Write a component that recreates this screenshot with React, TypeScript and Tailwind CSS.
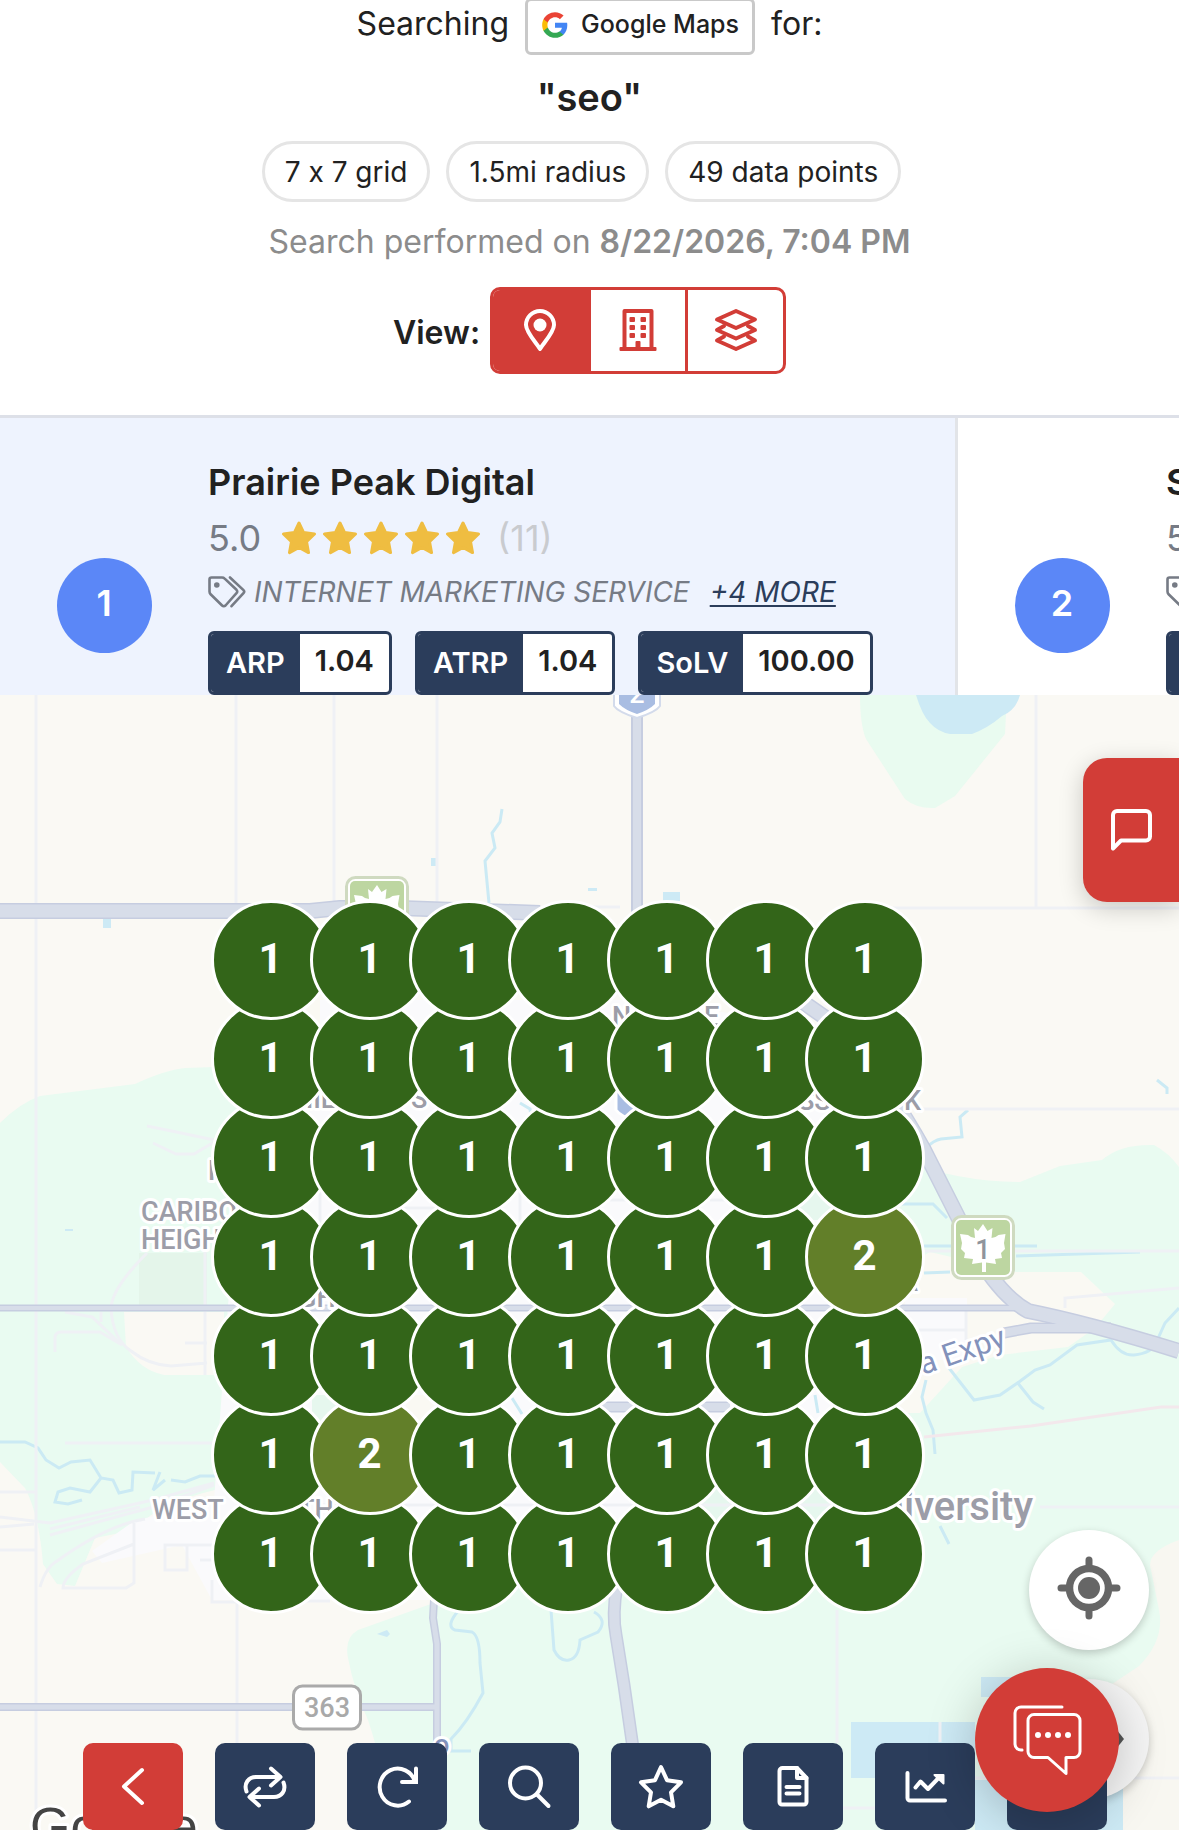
import type { ReactNode } from "react";

const GRID = [
    [1, 1, 1, 1, 1, 1, 1],
    [1, 1, 1, 1, 1, 1, 1],
    [1, 1, 1, 1, 1, 1, 1],
    [1, 1, 1, 1, 1, 1, 2],
    [1, 1, 1, 1, 1, 1, 1],
    [1, 2, 1, 1, 1, 1, 1],
    [1, 1, 1, 1, 1, 1, 1],
];

type Business = {
    rank: number;
    name: string;
    rating: string;
    reviews: number;
    category: string;
    more: string;
    metrics: [string, string][];
};

const BUSINESSES: Business[] = [
    {
        rank: 1,
        name: "Prairie Peak Digital",
        rating: "5.0",
        reviews: 11,
        category: "INTERNET MARKETING SERVICE",
        more: "+4 MORE",
        metrics: [
            ["ARP", "1.04"],
            ["ATRP", "1.04"],
            ["SoLV", "100.00"],
        ],
    },
    {
        rank: 2,
        name: "S",
        rating: "5.0",
        reviews: 9,
        category: "INTERNET MARKETING SERVICE",
        more: "+2 MORE",
        metrics: [["ARP", "2.10"]],
    },
];

/* ---------- icons ---------- */

function GoogleIcon() {
    return (
        <svg viewBox="0 0 48 48" className="size-7">
            <path fill="#4285F4" d="M45.1 24.5c0-1.6-.1-3.1-.4-4.5H24v8.500h11.800c-.5 2.800-2.100 5.100-4.400 6.700v5.500h7.100c4.200-3.800 6.600-9.500 6.600-16.200z" />
            <path fill="#34A853" d="M24 46c5.900 0 10.900-2 14.500-5.300l-7.100-5.500c-2 1.300-4.500 2.100-7.400 2.100-5.700 0-10.600-3.900-12.300-9.100H4.300v5.700C8 41.100 15.400 46 24 46z" />
            <path fill="#FBBC05" d="M11.700 28.200c-.4-1.300-.7-2.700-.7-4.200s.3-2.900.7-4.200v-5.700H4.300C2.900 17.100 2 20.500 2 24s.9 6.900 2.300 9.900l7.400-5.700z" />
            <path fill="#EA4335" d="M24 10.700c3.200 0 6.100 1.100 8.400 3.300l6.300-6.300C34.900 4.200 29.900 2 24 2 15.400 2 8 6.900 4.300 14.100l7.400 5.700c1.700-5.200 6.600-9.100 12.300-9.100z" />
        </svg>
    );
}

function PinIcon() {
    return (
        <svg viewBox="0 0 42 42" className="size-[42px]">
            <path d="M21 40C17 33.500 7 23 7 16a14 14 0 0 1 28 0c0 7-10 17.500-14 24z" fill="none" stroke="currentColor" strokeWidth="4" strokeLinejoin="round" />
            <circle cx="21" cy="16" r="6.500" fill="currentColor" />
        </svg>
    );
}

function BuildingIcon() {
    return (
        <svg viewBox="0 0 42 42" className="size-[42px]" fill="currentColor">
            <path d="M7.500 39V2h27v37" fill="none" stroke="currentColor" strokeWidth="4" strokeLinejoin="round" />
            <rect x="2.500" y="38" width="37" height="4" rx="1" />
            <rect x="12.500" y="8" width="5.500" height="5" rx="1" />
            <rect x="23.500" y="8" width="5.500" height="5" rx="1" />
            <rect x="12.500" y="16" width="5.500" height="5" rx="1" />
            <rect x="23.500" y="16" width="5.500" height="5" rx="1" />
            <rect x="12.500" y="24" width="5.500" height="5" rx="1" />
            <rect x="23.500" y="24" width="5.500" height="5" rx="1" />
            <rect x="18.500" y="32" width="5" height="8" rx="1" />
        </svg>
    );
}

function LayersIcon() {
    return (
        <svg viewBox="0 0 42 42" className="size-[42px]" fill="none" stroke="currentColor" strokeWidth="3.800" strokeLinejoin="round" strokeLinecap="round">
            <path d="M21 2l19 8.500L21 19 2 10.500z" />
            <path d="M9 17l-7 4 19 8.500L40 21l-7-4" />
            <path d="M9 27.500l-7 4L21 40l19-8.500-7-4" />
        </svg>
    );
}

function StarIcon() {
    return (
        <svg viewBox="0 0 36 34" className="h-[34px] w-9">
            <path d="M18 2l4.600 9.600L33.500 13l-8 7.600 2 11L18 26.500 8.500 31.600l2-11-8-7.600 10.900-1.400z" fill="#efbd41" stroke="#efbd41" strokeWidth="3" strokeLinejoin="round" />
        </svg>
    );
}

function TagsIcon() {
    return (
        <svg viewBox="0 0 38 32" className="h-8 w-[38px] shrink-0" fill="none" stroke="currentColor" strokeWidth="2.600" strokeLinejoin="round" strokeLinecap="round">
            <path d="M3.500 1.500H14c1 0 2 .4 2.700 1.100L28.500 13.800c1 1 1 2.400 0 3.400L17.500 29.500c-1 1-2.400 1-3.400 0L2.600 18.200c-.7-.7-1.100-1.700-1.100-2.700V3.500c0-1.100.9-2 2-2z" />
            <path d="M22 1.500l13.500 12.600c.9.900.9 2 0 3L23.500 30.200" />
            <circle cx="8.800" cy="9" r="2" fill="currentColor" stroke="none" />
            <circle cx="8.800" cy="9" r="1.500" fill="currentColor" />
        </svg>
    );
}

function SpeechIcon() {
    return (
        <svg viewBox="0 0 41 42" className="h-[42px] w-[41px]" fill="none" stroke="currentColor" strokeWidth="4" strokeLinejoin="round">
            <path d="M2 39.500V6a4 4 0 0 1 4-4h29a4 4 0 0 1 4 4v21.500a4 4 0 0 1-4 4H10z" />
        </svg>
    );
}

function ChatIcon() {
    return (
        <svg viewBox="0 0 144 144" className="size-36" fill="none" stroke="currentColor" strokeWidth="3" strokeLinejoin="round" strokeLinecap="round">
            <path d="M87 39H46a6 6 0 0 0-6 6v31a6 6 0 0 0 7 6" />
            <path d="M59 46.500h40a6 6 0 0 1 6 6v31a6 6 0 0 1-6 6h-8v16L73 89.500H59a6 6 0 0 1-6-6v-31a6 6 0 0 1 6-6z" />
            <g fill="currentColor" stroke="none">
                <circle cx="63" cy="67" r="3" />
                <circle cx="73" cy="67" r="3" />
                <circle cx="83" cy="67" r="3" />
                <circle cx="93" cy="67" r="3" />
            </g>
        </svg>
    );
}

function LocateIcon() {
    return (
        <svg viewBox="0 0 64 64" className="size-16" fill="none" stroke="#666">
            <path d="M32 4v8M32 52v8M4 32h8M52 32h8" strokeWidth="7" strokeLinecap="round" />
            <circle cx="32" cy="32" r="19.500" strokeWidth="7.500" />
            <circle cx="32" cy="32" r="11" fill="#666" stroke="none" />
        </svg>
    );
}

/* Toolbar icons share one 100x87 canvas, the size of a button. */
function ToolIcon({ children }: { children?: ReactNode }) {
    return (
        <svg viewBox="0 0 100 87" className="h-[87px] w-[100px]" fill="none" stroke="currentColor" strokeWidth="4" strokeLinejoin="round" strokeLinecap="round">
            {children}
        </svg>
    );
}

const TOOLS: { label: string; icon: ReactNode }[] = [
    {
        label: "Repeat search",
        icon: (
            <>
                <path d="M31.500 48.500c-3-8 2-14.500 9.500-14.500h24M56 25.500l9.500 8.500-9.500 8.500" />
                <path d="M68.500 39.500c3 8-2 14.500-9.500 14.500H35M44 45.500L34.500 54l9.500 8.500" />
            </>
        ),
    },
    {
        label: "Refresh",
        icon: (
            <>
                <path d="M62 58.500A18 18.500 0 1 1 68 39" />
                <path d="M69 25.500V39H55" strokeLinejoin="miter" />
            </>
        ),
    },
    {
        label: "Search",
        icon: (
            <>
                <circle cx="46.500" cy="40" r="15.500" />
                <path d="M58 51.500L69.500 63" />
            </>
        ),
    },
    {
        label: "Favourite",
        icon: <path d="M50 24l6 13.200 14 2.100-10 10 2.300 14L50 56.700l-12.300 6.600 2.300-14-10-10 14-2.100z" />,
    },
    {
        label: "Report",
        icon: (
            <>
                <path d="M39.500 25H54l9.500 10v24a2.500 2.500 0 0 1-2.500 2.500H39a2.500 2.500 0 0 1-2.500-2.500V28a3 3 0 0 1 3-3z" />
                <path d="M54 25v10h9.500M43.500 44h13M43.500 50.500h13" />
            </>
        ),
    },
    {
        label: "Trends",
        icon: (
            <>
                <path d="M32.500 30v25a2.500 2.500 0 0 0 2.500 2.500h35" />
                <path d="M40.500 44.500l5-6 7.500 7.500L63 35.500" />
                <path d="M59.500 32h9v8.500z" fill="currentColor" strokeWidth="2" />
            </>
        ),
    },
    { label: "More", icon: null },
];

/* ---------- map ---------- */

function MapleShield({ x, y, children }: { x: number; y: number; children?: ReactNode }) {
    return (
        <g transform={`translate(${x} ${y})`}>
            <rect x="1.500" y="1.500" width="61" height="62" rx="9" fill="#fff" stroke="#cfdac0" strokeWidth="3" />
            <rect x="5" y="5" width="54" height="55" rx="5" fill="#bdd6a1" />
            <path d="M32 9l4.500 7 5-3-1 10 4-1 3-2 7-1-1.500 9 1 6-4 4 1 5-7 1 1 5-10-1.500V57h-4v-9.500L21 49l1-5-9-1 1-5-4-4 1-6-2-9 8 1 3 2 4 1-1-10 4 3z" fill="#fff" />
            {children}
        </g>
    );
}

function MapCanvas() {
    return (
        <svg viewBox="0 695 1179 1135" preserveAspectRatio="xMidYMid slice" className="absolute inset-0 h-full w-full">
            <rect y="695" width="1179" height="1135" fill="#faf9f4" />

            {/* green land */}
            <g fill="#e9fbf1">
                <path d="M860 695q0 30 6 44l39 60q12 10 30 9l20-12 50-62 2-39z" fill="#e9fbf0" />
                <path d="M0 1123q20-20 40-27l95-12q30-14 50-16l60-2v400l-30 24q-60 14-80 40l-40 8-20 48-18-2-14-20q-4-50-18-76L0 1462z" />
                <path d="M900 1160q60 22 120 22l40-16 42-6q18-16 52-15 15 8 25 22v663H388q0-50-20-110-14-30-20-62-4-20 10-28l70-25 470-120z" />
            </g>
            <path d="M139 1253h68v52h-68z" fill="#e4f5ea" />
            <path d="M124 1312h100v63h-60q-24-5-38-28z" fill="#faf9f4" />
            <path d="M880 1280l50-28 86 20h65l34 32-20 24-27 19-68 8-38 12-42 46h-60z" fill="#faf9f3" />
            <path d="M905 1298h62v62h-62z" fill="#fafafc" />
            <path d="M1179 1540q-34 12-28 30l8 40q6 30-20 56l-39 26 23 138h56z" fill="#f8f7f1" />

            {/* built-up area, mostly behind the pins */}
            <path d="M250 1000h400l240 40v250l-60 200-240 80-160 30H212l-30-55-80 18-10-12 42-30 80-20z" fill="#fafafc" />
            <path d="M230 1000h90v40h-90zM406 1395h30v40h-30z" fill="#faf9f3" />
            <path d="M312 1395h28v36h-28zM800 1170h34v50h-34zM700 1480h34v50h-34zM800 1480h34v50h-34z" fill="#e6f7ee" />

            {/* water */}
            <g fill="#cdeaf5">
                <path d="M916 695q6 20 14 28 8 9 20 11h22q16-6 30-18 14-6 18-21z" />
                <path d="M851 1722h124v56H851zM981 1677h40v20h-40zM975 1780h148v50H975zM663 892h17v9h-17zM431 858h5v8h-5zM103 918h8v10h-8zM588 888h9v3h-9zM65 1229h8v2h-8zM377 1634l10-4 3 4-3 3z" />
            </g>
            <g fill="none" stroke="#cbeaf4" strokeWidth="3">
                <path d="M502 809l-2 13-8 11 3 15-10 13 4 42" />
                <path d="M926 1148q8-8 15-9l21-2-2-20 8-7M901 1204h32l14 14M924 1246h113M1016 1256l124-4M924 1273l26-1M1157 1080l10 8v6" />
                <path d="M949 1368l25 32 26-5 19-13 16-12 15-5 27-20 34-5q10 16 23 15 18-2 22-12l9-20 14-15" />
                <path d="M1017 1382l16 20 11 7M926 1380l-4 17 4 16 7 17 2 24M940 1526l9 18" />
                <path d="M0 1442h25l13 6 8 12 13 8 12-6 19-2 11 18 12 2 6 13 13-3 1-18 22 1M160 1472l-7 18 12-10M171 1480l14 2 15-6h20M101 1478l-11 14-20-4-12 4-3 10 13 2 14-4" />
                <path d="M459 1610q-14 16-4 20l17 2q8 4 8 31l3 30q-16 30-32 46v12h20M551 1610l3 40q6 12 15 10 10-2 11-20l18-8q10-12-4-20" />
                <path d="M520 1103l10 6 2 14M512 1398l10 16M815 1395l3 18" />
            </g>

            {/* minor roads */}
            <g fill="none" stroke="#eff1f5" strokeWidth="3">
                <path d="M36 695v1135M236 695v208M334 695v208M437 695v208M1036 695v213M893 908h286M580 907h40M237 1603v227M837 1610v133M920 1109h259M924 1251h255M65 1443h149M1040 1507h139" />
                <path d="M147 1126q30 6 67 14M153 1143l23 11h18l20-12M147 1253q-36 36-36 56 2 30 20 42 18 14 40 15l36-3M65 1312l27 5 30 28M55 1352v-14q0-6 6-6h39l22 13M205 1245v130M185 1343h22M101 1312v10" />
                <path d="M0 1492h36M0 1550h36M0 1517l50 6 103-23 61-17M0 1527l34-3M50 1535l103-28 61-22M50 1529l90-22M40 1587q6-20 17-26 50-36 88-42M134 1523v60l-8 5H63q0-10 20-24l51-20M165 1545h22v25h-22zM185 1545h30M200 1560h14M212 1580v22h30M300 1601h30" />
                <path d="M975 1778h204M940 1722v20M837 1808h40M966 1310v30M905 1330h62M1065 1308v-10l114-10" />
                <path d="M320 1190v40M400 1208h40M520 1190v40M610 1200h40M710 1200h40M320 1505h540" />
                <path d="M924 1437l107-11 130-19h18" stroke="#f3e8ec" />
            </g>

            {/* main roads */}
            <g fill="none" strokeLinejoin="round">
                <g stroke="#c6cde0">
                    <path d="M0 911h310l30-3h60l140 5" strokeWidth="16" />
                    <path d="M637 715v200" strokeWidth="12" />
                    <path d="M800 1000l40 28q50 60 84 122l38 75q30 66 66 86 60 12 151 40" strokeWidth="16" />
                    <path d="M1004 1333l27-5h80" strokeWidth="11" />
                    <path d="M0 1308h1019l50 18" strokeWidth="7" />
                    <path d="M0 1707h435M434 1600l-1 18 4 26v186" strokeWidth="8" />
                    <path d="M617 1585q-5 30-1 50l8 50 10 70" strokeWidth="13" />
                    <path d="M600 1407h130" strokeWidth="11" />
                </g>
                <g stroke="#d7dde9">
                    <path d="M0 911h310l30-3h60l140 5" strokeWidth="13" />
                    <path d="M637 715v200" strokeWidth="8" />
                    <path d="M800 1000l40 28q50 60 84 122l38 75q30 66 66 86 60 12 151 40" strokeWidth="13" />
                    <path d="M1004 1333l27-5h80" strokeWidth="8" />
                    <path d="M0 1308h1019l50 18" strokeWidth="4" />
                    <path d="M0 1707h435M434 1600l-1 18 4 26v186" strokeWidth="5" />
                    <path d="M617 1585q-5 30-1 50l8 50 10 70" strokeWidth="10" />
                    <path d="M600 1407h130" strokeWidth="8" />
                </g>
            </g>

            {/* shields */}
            <MapleShield x={345} y={876} />
            <MapleShield x={951} y={1215}>
                <text x="32" y="44" textAnchor="middle" fontSize="27" fill="#8f949c" fontWeight="500">1</text>
            </MapleShield>
            <path d="M614 680v26q4 6 23 12 19-6 23-12v-26z" fill="#fff" stroke="#d3dbeb" strokeWidth="2" />
            <path d="M619 680v24q6 6 18 10 12-4 18-10v-24z" fill="#a9bde2" />
            <text x="637" y="703" textAnchor="middle" fontSize="27" fill="#fff" fontWeight="500">2</text>
            <path d="M616 1090v20q4 6 21 12 17-6 21-12v-20z" fill="#a9bde2" stroke="#fff" strokeWidth="3" />
            <rect x="293.500" y="1686" width="67" height="43" rx="9" fill="#fff" stroke="#aaa" strokeWidth="3" />
            <text x="327" y="1717" textAnchor="middle" fontSize="27" fill="#a9a9a9" fontWeight="500">363</text>

            {/* place labels */}
            <g fontSize="27" fontWeight="500" fill="#9c9da8" stroke="#fff" strokeWidth="6" strokeLinejoin="round" paintOrder="stroke">
                <text x="141" y="1221">CARIBOU</text>
                <text x="141" y="1249">HEIGHTS</text>
                <text x="208" y="1180">N</text>
                <text x="152" y="1519">WEST</text>
                <text x="298" y="1519">TH</text>
                <text x="294" y="1108">HILLS</text>
                <text x="411" y="1108">S</text>
                <text x="298" y="1307">GH</text>
                <text x="612" y="1026">NO</text>
                <text x="704" y="1026">E</text>
                <text x="798" y="1110">SS</text>
                <text x="904" y="1110">K</text>
                <text x="900" y="1291">A</text>
                <text x="1033" y="1520" textAnchor="end" fontSize="40">University</text>
                <text x="923" y="1375" fontSize="31" fontWeight="400" fill="#8392bb" transform="rotate(-19 923 1375)">a Expy</text>
                <text x="434" y="1754" fill="#8392bb">o</text>
            </g>
            <text x="30" y="1844" fontSize="52" fill="#444" stroke="#fff" strokeWidth="6" strokeLinejoin="round" paintOrder="stroke" className="font-['Liberation_Sans',sans-serif]">Google</text>
        </svg>
    );
}

function RankGrid() {
    return (
        <div className="absolute top-[205px] left-1/2 -ml-[379px] grid w-[714px] grid-cols-[repeat(7,99px)] auto-rows-[99px]">
            {GRID.map((row, r) =>
                row.map((rank, c) => (
                    <button
                        key={`${r}-${c}`}
                        style={{ zIndex: (7 - r) * 7 + c }}
                        className={`relative flex size-[120px] items-center justify-center rounded-full border-3 border-white pb-1 text-[42px] font-bold text-white ${rank === 1 ? "bg-[#336519]" : "bg-[#627f29]"}`}
                    >
                        {rank}
                    </button>
                ))
            )}
        </div>
    );
}

/* ---------- sections ---------- */

function Header() {
    return (
        <header className="-mt-0.5 flex flex-col items-center bg-white pb-[41px]">
            <div className="flex h-[57px] items-center gap-4 text-[32px]">
                <span className="pb-1.5">Searching</span>
                <span className="flex h-full items-center gap-3 rounded-md border-3 border-[#c9c9c9] px-[13px] pb-1 text-[25px] font-medium">
                    <GoogleIcon />
                    Google Maps
                </span>
                <span className="pb-1.5">for:</span>
            </div>
            <h1 className="mt-[22px] text-[38px] leading-10 font-semibold">"seo"</h1>
            <ul className="mt-6 mr-4 flex gap-4 text-[28px] [font-feature-settings:'calt'_0]">
                {["7 x 7 grid", "1.5mi radius", "49 data points"].map((chip) => (
                    <li key={chip} className="flex h-[61px] items-center rounded-full border-3 border-[#e5e5e5] px-5">
                        {chip}
                    </li>
                ))}
            </ul>
            <p className="mt-5 text-[32px] leading-10 text-[#8c8c8c]">
                Search performed on <b className="font-semibold">8/22/2026, 7:04 PM</b>
            </p>
            <div className="mt-[25px] flex items-center gap-2.5">
                <span className="pt-1 text-[32px] font-semibold">View:</span>
                <div className="flex h-[87px] w-[296px] divide-x-3 divide-[#d23d37] overflow-hidden rounded-[10px] border-3 border-[#d23d37] text-[#d23d37]">
                    <button aria-label="Pins" className="flex flex-1 items-center justify-center bg-[#d23d37] pb-0.5 text-white"><PinIcon /></button>
                    <button aria-label="Businesses" className="flex flex-1 items-center justify-center pb-0.5"><BuildingIcon /></button>
                    <button aria-label="Layers" className="flex flex-1 items-center justify-center pb-0.5"><LayersIcon /></button>
                </div>
            </div>
        </header>
    );
}

function BusinessCard({ business, active }: { business: Business; active: boolean }) {
    return (
        <article className={`flex h-[374px] w-[958px] shrink-0 border-r-3 border-[#e2e4e8] ${active ? "bg-[#eef3fe]" : "bg-white"}`}>
            <div className="flex w-[208px] shrink-0 items-center justify-center">
                <span className="flex size-[95px] items-center justify-center rounded-full bg-[#5b87f7] pb-1 text-4xl font-semibold text-white">
                    {business.rank}
                </span>
            </div>
            <div className="pt-[42px] whitespace-nowrap">
                <h2 className="text-[36px] leading-11 font-semibold">{business.name}</h2>
                <div className="mt-3 flex items-center text-[36px] leading-11 text-[#767b85]">
                    {business.rating}
                    <span className="mr-4 ml-5 flex gap-[5px]">
                        {[1, 2, 3, 4, 5].map((n) => (
                            <StarIcon key={n} />
                        ))}
                    </span>
                    <span className="text-[#c9cbcf]">({business.reviews})</span>
                </div>
                <div className="mt-3 flex items-center text-[28px] leading-10 text-[#767b85] italic">
                    <TagsIcon />
                    <span className="ml-2">{business.category}</span>
                    <a href="#" className="ml-5 text-[#2b3d5b] underline decoration-2 underline-offset-3">{business.more}</a>
                </div>
                <dl className="mt-[19px] flex gap-[23px] text-[29px] font-semibold">
                    {business.metrics.map(([label, value]) => (
                        <div key={label} className="flex h-16 overflow-hidden rounded-md border-3 border-[#2b3d5b] bg-white">
                            <dt className="flex items-center bg-[#2b3d5b] px-[15px] text-white">{label}</dt>
                            <dd className="flex items-center px-[15px] pb-1">{value}</dd>
                        </div>
                    ))}
                </dl>
            </div>
        </article>
    );
}

function Toolbar() {
    return (
        <nav className="absolute inset-x-0 bottom-0 flex justify-center gap-8 pl-[11px]">
            <button aria-label="Back" className="h-[87px] w-[100px] shrink-0 rounded-[10px] bg-[#d23d37] text-white">
                <ToolIcon>
                    <path d="M59 27L41 43.500 59 60" />
                </ToolIcon>
            </button>
            {TOOLS.map((tool) => (
                <button key={tool.label} aria-label={tool.label} className="h-[87px] w-[100px] shrink-0 rounded-[10px] bg-[#2b3d5b] text-white">
                    <ToolIcon>{tool.icon}</ToolIcon>
                </button>
            ))}
        </nav>
    );
}

export default function App() {
    return (
        <div className="flex min-h-screen flex-col overflow-hidden bg-white font-[Inter,sans-serif] text-[#212121]">
            <Header />

            <section className="flex h-[280px] overflow-hidden border-t-3 border-[#dde0e8]">
                {BUSINESSES.map((business, i) => (
                    <BusinessCard key={business.rank} business={business} active={i === 0} />
                ))}
            </section>

            <main className="relative isolate min-h-[1100px] flex-1 overflow-hidden font-[Roboto,sans-serif]">
                <MapCanvas />
                <div className="absolute inset-0 isolate">
                    <RankGrid />
                </div>

                <button aria-label="Feedback" className="absolute top-[63px] right-0 flex h-36 w-24 items-center rounded-l-3xl bg-[#d23d37] pl-7 text-white shadow-[0_6px_24px_rgba(0,0,0,0.2)]">
                    <SpeechIcon />
                </button>

                <button aria-label="Show location" className="absolute right-[30px] bottom-[180px] flex size-[120px] items-center justify-center rounded-full bg-white pb-1 shadow-[0_3px_8px_rgba(0,0,0,0.2)]">
                    <LocateIcon />
                </button>
                <button aria-label="Compass" className="absolute right-[30px] bottom-[31px] flex size-[120px] items-center justify-end rounded-full bg-[#f5f5f5] pr-[25px] shadow-[0_3px_8px_rgba(0,0,0,0.2)]">
                    <svg viewBox="0 0 8 20" className="h-5 w-2"><path d="M0 0l8 10-8 10z" fill="#555" /></svg>
                </button>

                <Toolbar />

                <button aria-label="Open chat" className="absolute right-[60px] bottom-[18px] size-36 rounded-full bg-[#d23d37] text-white shadow-[0_8px_50px_rgba(0,0,0,0.22)]">
                    <ChatIcon />
                </button>
            </main>
        </div>
    );
}
